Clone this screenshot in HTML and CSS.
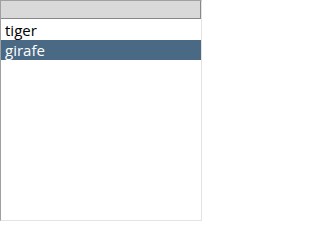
FILE: index.html
```html
<!DOCTYPE html>
<html>
<head>
<meta charset="utf-8">
<link rel="stylesheet" href="styles.css">
</head>
<body>
<div class="tree">
  <div class="header"></div>
  <div class="rows">
    <div class="row">tiger</div>
    <div class="row selected">girafe</div>
  </div>
</div>
</body>
</html>
```
FILE: styles.css
```css
html, body {
  margin: 0;
  padding: 0;
  background: #ffffff;
}
.tree {
  box-sizing: border-box;
  width: 202px;
  height: 221px;
  border-top: 1px solid #a0a0a0;
  border-left: 1px solid #a0a0a0;
  border-right: 1px solid #e3e3e3;
  border-bottom: 1px solid #e3e3e3;
  background: #ffffff;
  display: flex;
  flex-direction: column;
  font-family: "Open Sans", "Noto Sans", sans-serif;
  font-size: 15px;
}
.header {
  box-sizing: border-box;
  height: 18px;
  background: #d9d9d9;
  border-right: 1px solid #888888;
  border-bottom: 1px solid #888888;
}
.rows {
  padding-top: 1px;
  display: flex;
  flex-direction: column;
}
.row {
  height: 20px;
  line-height: 20px;
  padding-left: 4px;
  color: #000000;
}
.row.selected {
  background: #4a6984;
  color: #ffffff;
}
```
